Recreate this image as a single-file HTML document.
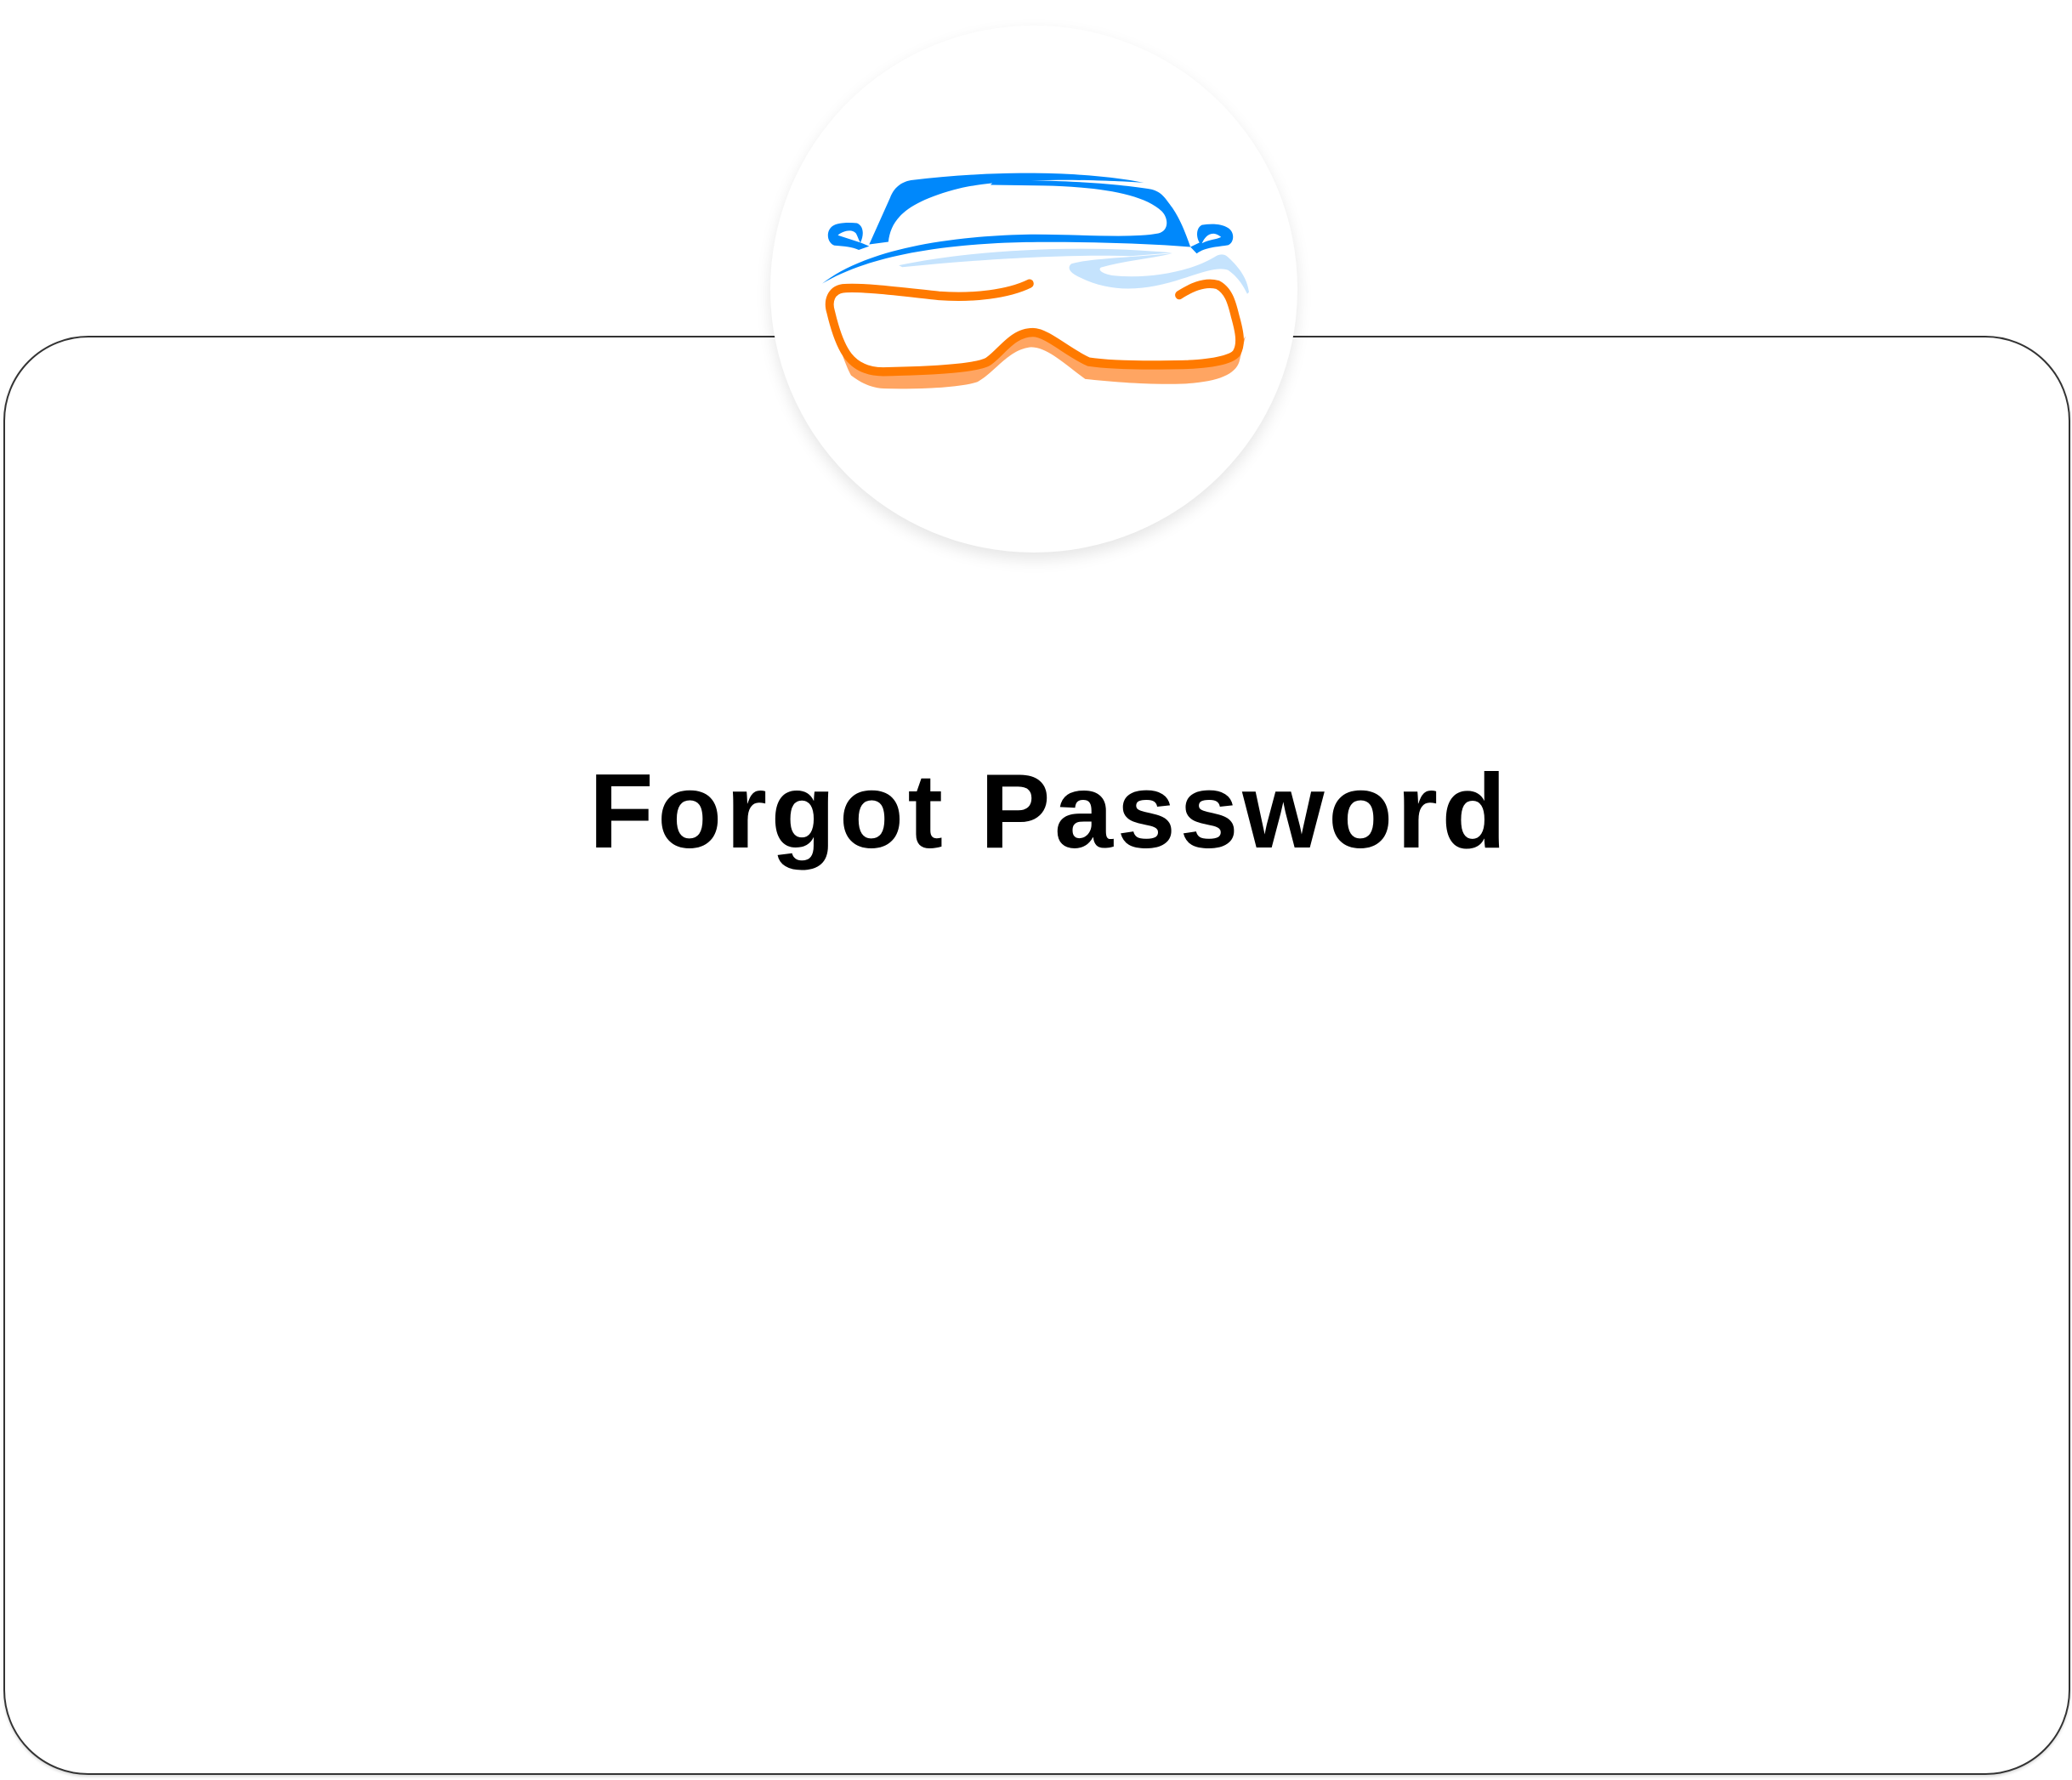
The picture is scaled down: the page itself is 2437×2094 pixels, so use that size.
<!DOCTYPE html>
<html><head><meta charset="utf-8"><style>
html,body{margin:0;padding:0;background:#fff;}
body{width:2437px;height:2094px;position:relative;overflow:hidden;}
.card{position:absolute;left:4px;top:395px;width:2427px;height:1689px;border:2px solid #333;border-radius:100px;box-sizing:content-box;box-shadow:0 2px 3px rgba(0,0,0,0.15);background:#fff;}
.circle{position:absolute;left:906px;top:30px;width:620px;height:620px;border-radius:50%;background:#fff;box-shadow:0 8px 18px rgba(0,0,0,0.10);}
.title{position:absolute;left:16px;width:2437px;top:893px;text-align:center;font-family:"Liberation Sans",Arial,sans-serif;font-weight:bold;font-size:124px;line-height:124px;letter-spacing:4.7px;color:#000;}
svg{position:absolute;left:967px;top:199px;}
</style></head><body>
<div class="card"></div>
<div class="circle"></div>
<svg width="502" height="259" viewBox="165 460 1225 600" preserveAspectRatio="none">
<path fill="#0088fb" d="M1088,497 C950,470 700,458 420,490 C390,495 370,512 360,538 L300,665 L355,658 C362,600 400,550 560,512 C700,482 950,488 1088,497 Z"/>
<path fill="#0088fb" d="M165,772 C260,700 450,645 750,638 C880,636 1050,650 1130,635 C1160,628 1160,595 1140,575 C1085,525 950,508 800,505 L648,503 L660,492 C800,487 1000,497 1110,515 C1140,522 1150,540 1170,565 C1195,600 1210,640 1222,672 C1100,662 900,657 750,659 C450,665 270,712 165,772 Z"/>
<path fill="#0088fb" fill-rule="evenodd" d="M275,660 C285,640 285,615 265,607 C240,605 210,605 195,615 C175,628 178,660 200,668 C230,670 250,672 270,680 L300,670 Z M210,640 C225,628 250,622 262,635 C268,645 270,655 275,660 Z"/>
<path fill="#0088fb" fill-rule="evenodd" d="M1248,660 C1238,645 1238,620 1255,612 C1280,608 1310,608 1330,620 C1350,632 1348,660 1330,667 C1300,672 1265,672 1240,690 L1222,672 Z M1255,662 C1265,640 1285,625 1310,645 C1295,652 1275,652 1255,662 Z"/>
<path fill="#c5e3fd" d="M385,722 C600,680 900,664 1170,688 L1050,697 C900,692 650,702 395,727 Z"/>
<path fill="#c5e3fd" d="M1170,690 C1050,700 920,705 880,718 C865,730 880,745 905,755 C1000,800 1100,790 1200,758 C1260,740 1300,725 1330,735 C1360,755 1375,780 1385,800 L1390,795 C1385,760 1365,730 1330,700 C1320,690 1305,690 1290,700 C1220,740 1100,760 1000,750 C970,745 955,735 965,728 C1030,710 1100,705 1170,690 Z"/>
<path fill="#ffa562" d="M205,915 C220,960 235,1000 248,1022 C280,1045 310,1058 350,1058 C450,1060 560,1055 610,1040 C660,1015 700,950 765,945 C810,945 860,990 920,1032 C1000,1040 1100,1048 1200,1045 C1300,1040 1350,1020 1362,985 L1380,915 L1345,970 C1300,990 1200,995 1100,990 L930,985 C880,970 820,905 770,900 C700,900 680,960 640,985 C600,1000 480,1005 330,1005 C270,1005 240,975 205,915 Z"/>
<path fill="none" stroke="#ff7a00" stroke-width="24" stroke-linecap="round" d="M760,772 C700,800 600,812 500,805 C400,795 280,780 225,785 C190,790 180,820 190,850 C200,890 215,940 240,970 C265,1000 300,1012 340,1012 C450,1010 600,1005 640,985 C680,960 710,905 770,905 C810,905 870,960 930,985 C1000,995 1100,995 1200,993 C1300,990 1345,975 1355,960 C1370,935 1362,900 1350,860 C1340,820 1330,790 1300,775 C1260,765 1220,785 1190,803"/>
</svg>
<div class="title">Forgot Password</div>
</body></html>
